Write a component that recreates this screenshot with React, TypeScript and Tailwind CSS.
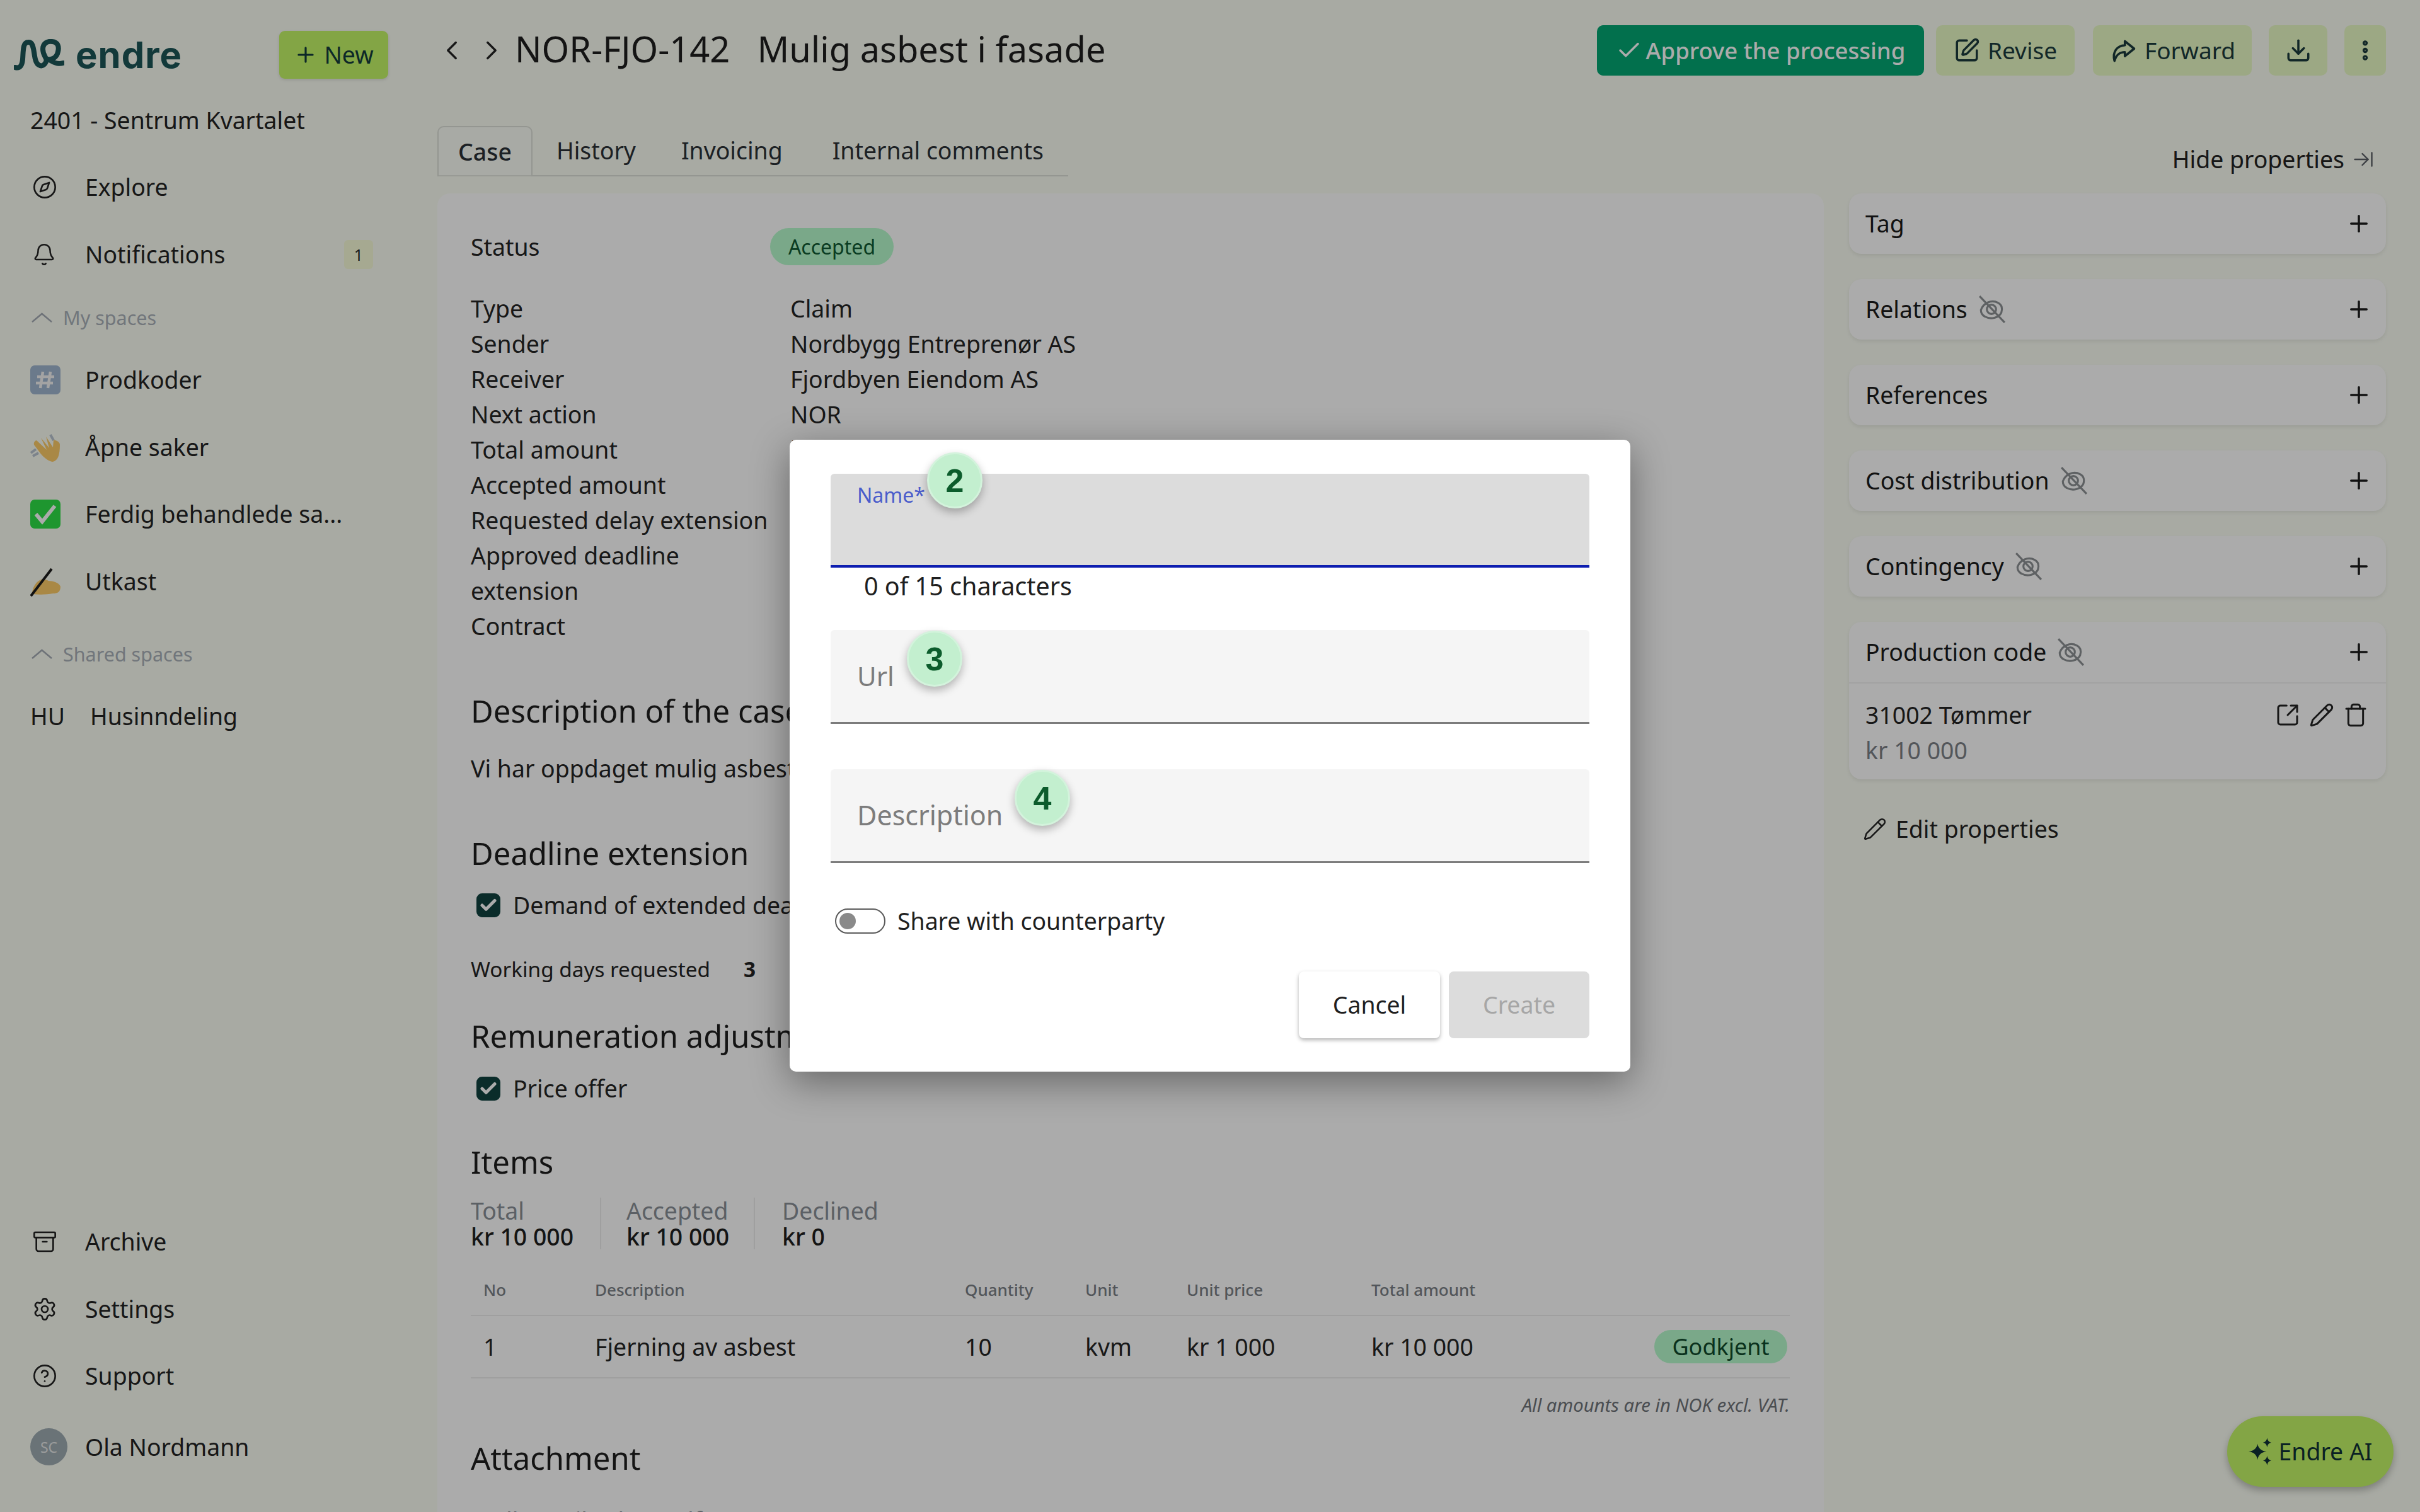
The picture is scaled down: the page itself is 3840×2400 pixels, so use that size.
import {
  Archive,
  ArrowRightToLine,
  Bell,
  Check,
  ChevronLeft,
  ChevronRight,
  CircleHelp,
  Compass,
  Download,
  EllipsisVertical,
  Pencil,
  Plus,
  Settings,
  SquareArrowOutUpRight,
  SquarePen,
  Trash,
} from 'lucide-react';
import type { ReactNode } from 'react';

function Logo() {
  return (
    <svg viewBox="0 0 80 50" className="w-[80px] h-[50px]" fill="none" stroke="#1b5557" strokeWidth="8" strokeLinecap="round">
      <path d="M2 45C10 47 13 42 14 32C15 18 14 5 23 5C32 4 31 20 34 32C37 44 46 45 50 38C55 30 46 28 46 16C46 6 54 3 61 4C70 5 72 12 70 20C68 30 60 33 54 32" />
      <path d="M58 34C64 38 72 40 78 38" />
    </svg>
  );
}

function HashEmoji() {
  return (
    <svg viewBox="0 0 48 48" className="w-[48px] h-[48px]">
      <rect x="0" y="1" width="48" height="46" rx="7" fill="#a0b6cf" />
      <path d="M20 11L16 37M32 11L28 37M11 19H38M9 29H36" stroke="#f4f4f4" strokeWidth="4.5" fill="none" />
    </svg>
  );
}

function WaveEmoji() {
  return (
    <svg viewBox="0 0 48 48" className="w-[48px] h-[48px]">
      <path d="M1 33L9 27M4 38L13 33M32 4L37 13" stroke="#b9c4d0" strokeWidth="4" fill="none" />
      <path d="M10 13L26 28L17 9L30 25L25 7L36 24L37 12C41 13 47 15 47 20C47 36 44 46 35 47C28 46 18 37 15 32L6 20C5 16 8 13 10 13Z" fill="#fdcb68" />
    </svg>
  );
}

function CheckEmoji() {
  return (
    <svg viewBox="0 0 48 48" className="w-[48px] h-[48px]">
      <rect x="0" y="1" width="48" height="46" rx="7" fill="#2ee046" />
      <path d="M9 24L19 36L39 11" stroke="#ffffff" strokeWidth="6" fill="none" />
    </svg>
  );
}

function WritingEmoji() {
  return (
    <svg viewBox="0 0 48 48" className="w-[48px] h-[48px]">
      <path d="M3 44C3 34 9 25 15 22C20 19 25 21 29 23C36 23 46 26 48 32C48 41 43 43 36 43C26 45 14 45 3 44Z" fill="#fdcb68" />
      <path d="M1 47L34 4" stroke="#1b1b1b" strokeWidth="4" />
    </svg>
  );
}

function SparkleIcon() {
  return (
    <svg viewBox="0 0 40 48" className="w-[38px] h-[46px]" fill="#103236">
      <path d="M15 11C16 18 21 23 30 24C21 25 16 30 15 38C14 30 9 25 0 24C9 23 14 18 15 11Z" />
      <path d="M31 1C32 6 34 8 38 9C34 10 32 12 31 17C30 12 28 10 24 9C28 8 30 6 31 1Z" />
      <path d="M31 31C32 36 34 38 38 39C34 40 32 42 31 47C30 42 28 40 24 39C28 38 30 36 31 31Z" />
    </svg>
  );
}

function ShareArrow() {
  return (
    <svg viewBox="0 0 24 24" className="w-[44px] h-[44px]" fill="none" stroke="currentColor" strokeWidth="2" strokeLinejoin="round" strokeLinecap="round">
      <path d="M13.5 4L21.5 10.5L13.5 17V13.5C8.5 13.5 6 16 4.5 21C2.5 13.5 6.5 8 13.5 7.5V4Z" />
    </svg>
  );
}

function HiddenIcon() {
  return (
    <svg viewBox="0 0 44 44" className="w-[46px] h-[46px] shrink-0" fill="none" stroke="#8d9194" strokeWidth="3">
      <path d="M6 23C10 12 22 7 32 12C38 15 39 21 37 27C33 35 21 38 12 33C8 31 6 27 6 23Z" />
      <circle cx="22" cy="22" r="7" />
      <path d="M4 2L42 42" />
    </svg>
  );
}

function CollapseChevron() {
  return (
    <svg viewBox="0 0 33 16" className="w-[33px] h-[16px]" fill="none" stroke="#a4abb3" strokeWidth="2.5">
      <path d="M1 15L16.5 2L32 15" />
    </svg>
  );
}

function TickBox() {
  return (
    <span className="flex items-center justify-center w-[38px] h-[38px] rounded-[9px] bg-[#10423f] shrink-0">
      <Check className="w-[30px] h-[30px] text-white" strokeWidth={4} />
    </span>
  );
}

function NavRow({ icon, label, gap = 'w-[87px]', badge }: { icon: ReactNode; label: string; gap?: string; badge?: string }) {
  return (
    <div className="h-[106.5px] flex items-center pl-[48px] pr-[102px]">
      <span className={`${gap} shrink-0 flex items-center`}>{icon}</span>
      <span className="flex-1 truncate">{label}</span>
      {badge && (
        <span className="w-[46px] h-[46px] rounded-[6px] bg-[#f8fcd8] flex items-center justify-center text-[25px]">{badge}</span>
      )}
    </div>
  );
}

function SpaceHeading({ label }: { label: string }) {
  return (
    <div className="flex items-center pl-[50px] gap-[17px] text-[30.5px] text-[#a9b0b8]">
      <CollapseChevron />
      <span>{label}</span>
    </div>
  );
}

function PropCard({ title, hidden, children }: { title: string; hidden?: boolean; children?: ReactNode }) {
  return (
    <div className="bg-white rounded-[20px] shadow-[0_3px_6px_rgba(0,0,0,0.08)]">
      <div className="h-[96px] flex items-center pl-[26px] pr-[22px] text-[#1b1b1b] gap-[15px]">
        <span>{title}</span>
        {hidden && <HiddenIcon />}
        <Plus className="ml-auto w-[42px] h-[42px]" strokeWidth={2} />
      </div>
      {children}
    </div>
  );
}

function NumberBadge({ value, className }: { value: string; className: string }) {
  return (
    <span className={`absolute w-[88px] h-[89px] rounded-full bg-[#c3efcf] border-[3px] border-[#d3f3dc] shadow-[0_6px_14px_rgba(0,0,0,0.28)] flex items-center justify-center text-[#0c5c2c] text-[52px] font-bold font-['Liberation_Sans',sans-serif] ${className}`}>
      {value}
    </span>
  );
}

const facts = [
  ['Type', 'Claim'],
  ['Sender', 'Nordbygg Entreprenør AS'],
  ['Receiver', 'Fjordbyen Eiendom AS'],
  ['Next action', 'NOR'],
  ['Total amount', 'kr 10 000'],
  ['Accepted amount', 'kr 10 000'],
  ['Requested delay extension', '3 days'],
  ['Approved deadline extension', '3 days'],
  ['Contract', 'Sentrum Kvartalet'],
];

const properties = ['Relations', 'References', 'Cost distribution', 'Contingency'];

export default function App() {
  return (
    <div className="relative w-[3840px] h-[2400px] overflow-hidden flex bg-[#fbfef4] text-[#232323] text-[37.4px] leading-[56px] font-['Noto_Sans',sans-serif]">
      {/* Sidebar */}
      <aside className="w-[694px] shrink-0 h-full flex flex-col">
        <div className="h-[160px] flex items-center pt-[14px] pl-[22px] pr-[78px]">
          <Logo />
          <span className="ml-[18px] text-[58px] font-bold tracking-[1px] text-[#1b5557] font-['Inter',sans-serif]">endre</span>
          <button className="ml-auto w-[173px] h-[76px] rounded-[9px] bg-[#c4f667] shadow-[0_2px_5px_rgba(0,0,0,0.12)] flex items-center justify-center gap-[10px] text-[#143c3c]">
            <Plus className="w-[38px] h-[38px]" strokeWidth={2} />
            New
          </button>
        </div>
        <div className="pl-[48px] h-[62px] flex items-center">2401 - Sentrum Kvartalet</div>
        <div className="mt-[22px]">
          <NavRow icon={<Compass className="w-[40px] h-[40px] ml-[3px]" strokeWidth={1.6} />} label="Explore" />
          <NavRow icon={<Bell className="w-[38px] h-[38px] ml-[3px]" strokeWidth={1.6} />} label="Notifications" badge="1" />
        </div>
        <div className="mt-[-3px] h-[100px] flex items-center">
          <SpaceHeading label="My spaces" />
        </div>
        <div className="mt-[-4px]">
          <NavRow icon={<HashEmoji />} label="Prodkoder" />
          <NavRow icon={<WaveEmoji />} label="Åpne saker" />
          <NavRow icon={<CheckEmoji />} label="Ferdig behandlede sa..." />
          <NavRow icon={<WritingEmoji />} label="Utkast" />
        </div>
        <div className="h-[100px] flex items-center mt-[12px]">
          <SpaceHeading label="Shared spaces" />
        </div>
        <div className="mt-[-4px]">
          <NavRow icon={<span>HU</span>} gap="w-[95px]" label="Husinndeling" />
        </div>
        <div className="mt-auto pb-[50px]">
          <NavRow icon={<Archive className="w-[40px] h-[40px] ml-[3px]" strokeWidth={1.6} />} label="Archive" />
          <NavRow icon={<Settings className="w-[40px] h-[40px] ml-[3px]" strokeWidth={1.6} />} label="Settings" />
          <NavRow icon={<CircleHelp className="w-[40px] h-[40px] ml-[3px]" strokeWidth={1.6} />} label="Support" />
          <div className="mt-[6px]">
            <NavRow
              icon={
                <span className="w-[59px] h-[59px] rounded-full bg-[#9eacb2] flex items-center justify-center text-[23px] text-[#e6e8e8]">SC</span>
              }
              label="Ola Nordmann"
            />
          </div>
        </div>
      </aside>

      {/* Main column */}
      <main className="flex-1 min-w-0 flex flex-col pr-[54px]">
        <header className="h-[160px] shrink-0 flex items-center">
          <ChevronLeft className="w-[50px] h-[50px] translate-x-[-2px]" strokeWidth={1.6} />
          <ChevronRight className="ml-[11px] w-[50px] h-[50px]" strokeWidth={1.6} />
          <h1 className="ml-[12px] mb-[6px] flex gap-[43px] text-[56px] leading-[70px] text-[#1f1f1f]">
            <span>NOR-FJO-142</span>
            <span>Mulig asbest i fasade</span>
          </h1>
          <div className="ml-auto flex items-center text-[37px]">
            <button className="w-[519px] h-[80px] rounded-[10px] bg-[#03a774] text-white flex items-center justify-center gap-[6px] font-medium text-[36.5px]">
              <Check className="w-[42px] h-[42px]" strokeWidth={2} />
              Approve the processing
            </button>
            <button className="ml-[19px] w-[220px] h-[80px] rounded-[10px] bg-[#e9fbc5] flex items-center justify-center gap-[12px] text-[#1c3b3d]">
              <SquarePen className="w-[42px] h-[42px]" strokeWidth={2} />
              Revise
            </button>
            <button className="ml-[29px] w-[252px] h-[80px] rounded-[10px] bg-[#e9fbc5] flex items-center justify-center gap-[12px] text-[#1c3b3d]">
              <ShareArrow />
              Forward
            </button>
            <button className="ml-[27px] w-[93px] h-[80px] rounded-[10px] bg-[#e9fbc5] flex items-center justify-center text-[#1c3b3d]">
              <Download className="w-[42px] h-[42px]" strokeWidth={2} />
            </button>
            <button className="ml-[27px] w-[66px] h-[80px] rounded-[10px] bg-[#e9fbc5] flex items-center justify-center text-[#1c3b3d]">
              <EllipsisVertical className="w-[40px] h-[40px]" strokeWidth={3} />
            </button>
          </div>
        </header>

        <div className="mt-[40px] h-[80px] shrink-0 flex">
          <nav className="w-[1001px] flex border-b-[2px] border-[#dde0d8] text-[#2b3036]">
            <span className="w-[151px] h-[80px] flex items-center justify-center bg-white/20 border-[2px] border-b-0 border-[#dde0d8] rounded-t-[10px] font-medium">Case</span>
            <span className="ml-[38px] flex items-center">History</span>
            <span className="ml-[72px] flex items-center">Invoicing</span>
            <span className="ml-[79px] flex items-center">Internal comments</span>
          </nav>
          <div className="ml-auto mt-[26px] pr-[18px] h-[54px] flex items-center gap-[12px]">
            Hide properties
            <ArrowRightToLine className="w-[36px] h-[36px] text-[#5c6066]" strokeWidth={1.6} />
          </div>
        </div>

        <div className="mt-[27px] flex-1 min-h-0 flex gap-[40px]">
          {/* Case card */}
          <section className="w-[2200px] shrink-0 h-[2200px] bg-white rounded-[20px] pl-[53px] pr-[54px] pt-[55px] text-[#242424]">
            <div className="flex items-center h-[59px]">
              <span className="w-[475px]">Status</span>
              <span className="w-[196px] h-[59px] rounded-full bg-[#b7fbcd] text-[#0f5a33] text-[32px] flex items-center justify-center">Accepted</span>
            </div>
            <div className="mt-[41px] grid grid-cols-[507px_1fr]">
              {facts.map(([label, value]) => (
                <div key={label} className="contents">
                  <span className="max-w-[490px]">{label}</span>
                  <span>{value}</span>
                </div>
              ))}
            </div>

            <h2 className="mt-[76px] text-[49px] leading-[60px] text-[#1f1f1f]">Description of the case</h2>
            <p className="mt-[34px]">Vi har oppdaget mulig asbest i fasaden under arbeidet.</p>

            <h2 className="mt-[76px] text-[49px] leading-[60px] text-[#1f1f1f]">Deadline extension</h2>
            <div className="mt-[25px] flex items-center gap-[20px] pl-[9px]">
              <TickBox />
              Demand of extended deadline
            </div>
            <div className="mt-[45px] flex items-center text-[33.3px]">
              <span className="w-[433px]">Working days requested</span>
              <span className="font-bold">3</span>
            </div>

            <h2 className="mt-[48px] text-[49px] leading-[60px] text-[#1f1f1f]">Remuneration adjustment</h2>
            <div className="mt-[26px] flex items-center gap-[20px] pl-[9px]">
              <TickBox />
              Price offer
            </div>

            <h2 className="mt-[58px] text-[49px] leading-[60px] text-[#1f1f1f]">Items</h2>
            <div className="mt-[27px] flex leading-[41px]">
              <div className="w-[207px] border-r-[2px] border-[#eeeeee]">
                <div className="text-[#8a9097]">Total</div>
                <div className="font-medium text-[#1f1f1f]">kr 10 000</div>
              </div>
              <div className="ml-[40px] w-[204px] border-r-[2px] border-[#eeeeee]">
                <div className="text-[#8a9097]">Accepted</div>
                <div className="font-medium text-[#1f1f1f]">kr 10 000</div>
              </div>
              <div className="ml-[43px]">
                <div className="text-[#8a9097]">Declined</div>
                <div className="font-medium text-[#1f1f1f]">kr 0</div>
              </div>
            </div>

            <div className="mt-[24px] h-[82px] grid grid-cols-[177px_587px_191px_161px_293px_1fr] items-center pl-[20px] border-b-[2px] border-[#eeeeee] text-[26px] text-[#7b8087] font-medium">
              <span>No</span>
              <span>Description</span>
              <span>Quantity</span>
              <span>Unit</span>
              <span>Unit price</span>
              <span>Total amount</span>
            </div>
            <div className="h-[99px] grid grid-cols-[177px_587px_191px_161px_293px_1fr] items-center pl-[20px] border-b-[2px] border-[#eeeeee]">
              <span>1</span>
              <span>Fjerning av asbest</span>
              <span>10</span>
              <span>kvm</span>
              <span>kr 1 000</span>
              <div className="flex items-center justify-between pr-[4px]">
                <span>kr 10 000</span>
                <span className="w-[211px] h-[53px] rounded-full bg-[#b7fbcd] text-[#0f4a2c] text-[36px] flex items-center justify-center">Godkjent</span>
              </div>
            </div>
            <div className="mt-[20px] h-[44px] flex items-center justify-end text-[29.3px] italic text-[#6f747a]">All amounts are in NOK excl. VAT.</div>
            <h2 className="mt-[32px] text-[49px] leading-[60px] text-[#1f1f1f]">Attachment</h2>
            <p className="mt-[42px] text-[#8a9097]">Vedlegg til saken.pdf</p>
          </section>

          {/* Properties */}
          <section className="flex-1 min-w-0 flex flex-col gap-[40px]">
            <PropCard title="Tag" />
            {properties.map((title) => (
              <PropCard key={title} title={title} hidden={title !== 'References'} />
            ))}
            <PropCard title="Production code" hidden>
              <div className="border-t-[2px] border-[#f2f2f2] h-[154px] px-[26px] pt-[22px] flex justify-between">
                <div>
                  <div>31002 Tømmer</div>
                  <div className="text-[#7d8187]">kr 10 000</div>
                </div>
                <div className="flex gap-[14px] h-[56px] items-center pr-[2px]">
                  <SquareArrowOutUpRight className="w-[40px] h-[40px]" strokeWidth={1.8} />
                  <Pencil className="w-[40px] h-[40px]" strokeWidth={1.8} />
                  <Trash className="w-[40px] h-[40px]" strokeWidth={1.8} />
                </div>
              </div>
            </PropCard>
            <div className="flex items-center gap-[14px] pl-[22px] mt-[11px]">
              <Pencil className="w-[38px] h-[38px]" strokeWidth={1.6} />
              Edit properties
            </div>
          </section>
        </div>
      </main>

      <button className="absolute left-[3534px] top-[2248px] w-[264px] h-[112px] rounded-full bg-[#c4f667] shadow-[0_6px_12px_rgba(0,0,0,0.25)] flex items-center justify-center gap-[10px] text-[#103236]">
        <SparkleIcon />
        Endre AI
      </button>

      {/* Dimmed backdrop and dialog */}
      <div className="absolute inset-0 bg-black/[0.33]" />
      <div className="absolute left-[1253px] top-[698px] w-[1334px] h-[1003px] bg-white rounded-[10px] px-[65px] pt-[54px] shadow-[0_16px_60px_rgba(0,0,0,0.4)] text-[#1f1f1f]">
        <div className="h-[149px] bg-[#dcdcdc] rounded-t-[6px] border-b-[4px] border-[#0d1db0] pl-[42px] pt-[15px] text-[32px] leading-[38px] text-[#4a5ccb]">Name*</div>
        <div className="h-[58px] pl-[53px] text-[39.5px] leading-[58px]">0 of 15 characters</div>
        <div className="mt-[41px] h-[149px] bg-[#f5f5f5] rounded-t-[6px] border-b-[3px] border-[#7c7c7c] pl-[42px] flex items-center text-[#7c7c7c] text-[42px]">Url</div>
        <div className="mt-[72px] h-[149px] bg-[#f5f5f5] rounded-t-[6px] border-b-[3px] border-[#7c7c7c] pl-[42px] flex items-center text-[#7c7c7c] text-[43px]">Description</div>
        <div className="mt-[72px] h-[40px] flex items-center pl-[7px] gap-[19px] text-[37.4px]">
          <span className="w-[80px] h-[40px] rounded-full border-[2px] border-[#5b5b5b] flex items-center pl-[5px]">
            <span className="w-[26px] h-[26px] rounded-full bg-[#8a8a8a]" />
          </span>
          Share with counterparty
        </div>
        <div className="mt-[60px] flex justify-end gap-[14px]">
          <button className="w-[224px] h-[106px] rounded-[8px] bg-white shadow-[0_3px_6px_rgba(0,0,0,0.3)]">Cancel</button>
          <button className="w-[223px] h-[106px] rounded-[8px] bg-[#dcdcdc] text-[#a6a6a6]">Create</button>
        </div>
        <NumberBadge value="2" className="left-[218px] top-[20px]" />
        <NumberBadge value="3" className="left-[186px] top-[303px]" />
        <NumberBadge value="4" className="left-[357px] top-[524px]" />
      </div>
    </div>
  );
}
